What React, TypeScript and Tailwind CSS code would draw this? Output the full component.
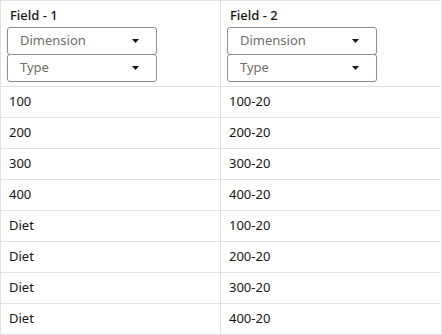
import React from "react";

const rows = [
  ["100", "100-20"],
  ["200", "200-20"],
  ["300", "300-20"],
  ["400", "400-20"],
  ["Diet", "100-20"],
  ["Diet", "200-20"],
  ["Diet", "300-20"],
  ["Diet", "400-20"],
];

function Select({ label }: { label: string }) {
  return (
    <div className="flex h-[28px] w-[150px] items-center justify-between rounded-[3px] border border-[#8f8d8b] pl-[12px] pr-[17px] text-[13px] text-[#6f6c69]">
      <span>{label}</span>
      <svg width="7" height="4" viewBox="0 0 7 4">
        <path d="M0 0H7L3.5 4Z" fill="#161513" />
      </svg>
    </div>
  );
}

function HeaderCell({ title }: { title: string }) {
  return (
    <div className="flex flex-col pl-[6px] pt-[4px] pb-[4px]">
      <div className="pl-[3px] text-[13px] font-medium leading-[20px] text-[#161513]">{title}</div>
      <div className="mt-[2px] flex flex-col gap-0">
        <Select label="Dimension" />
        <div className="-mt-[1px]">
          <Select label="Type" />
        </div>
      </div>
    </div>
  );
}

export default function App() {
  return (
    <div className="w-[442px] bg-white" style={{ fontFamily: '"Noto Sans", "Open Sans", sans-serif' }}>
      <div className="grid grid-cols-[220px_221px] border-l border-t border-[#e1e1e1]">
        <div className="h-[86px] border-b border-r border-[#e1e1e1]">
          <HeaderCell title="Field - 1" />
        </div>
        <div className="h-[86px] border-b border-r border-[#e1e1e1]">
          <HeaderCell title="Field - 2" />
        </div>
        {rows.map((r, i) => (
          <React.Fragment key={i}>
            <div className="flex h-[31px] items-center border-b border-r border-[#e1e1e1] pl-[8px] text-[13px] text-[#161513]">
              {r[0]}
            </div>
            <div className="flex h-[31px] items-center border-b border-r border-[#e1e1e1] pl-[8px] text-[13px] text-[#161513]">
              {r[1]}
            </div>
          </React.Fragment>
        ))}
      </div>
    </div>
  );
}
